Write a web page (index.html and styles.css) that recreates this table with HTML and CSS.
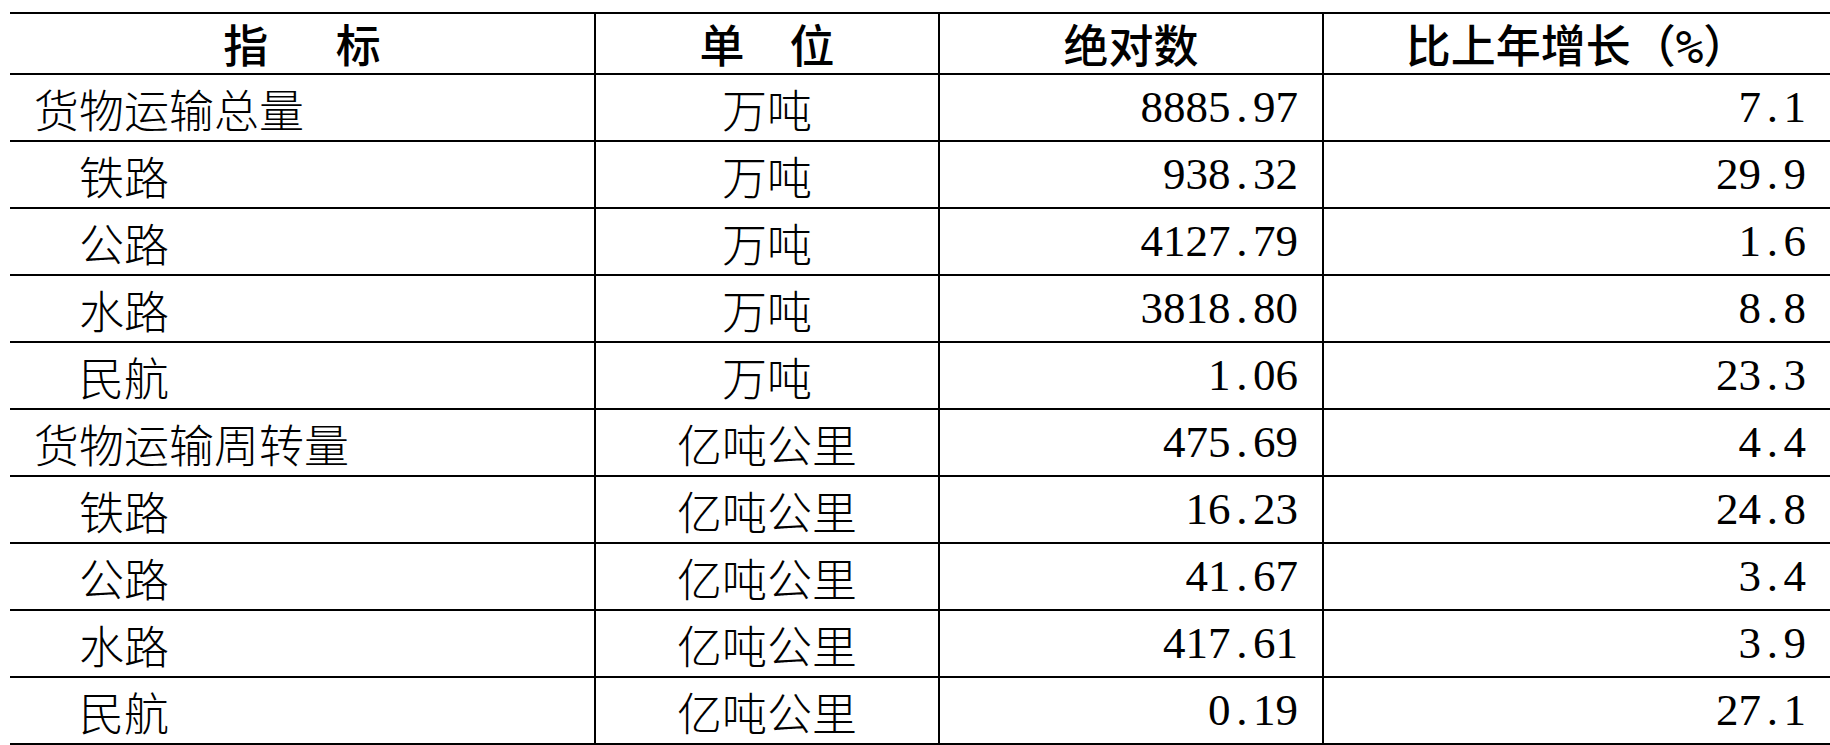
FILE: index.html
```html
<!DOCTYPE html>
<html lang="zh-CN">
<head>
<meta charset="utf-8">
<title>货物运输</title>
<link rel="stylesheet" href="styles.css">
</head>
<body>
<div class="tbl">
  <div class="cell head">指&emsp;&ensp;标</div>
  <div class="cell head">单&emsp;位</div>
  <div class="cell head">绝对数</div>
  <div class="cell head last">比上年增长（<span class="pct">%</span>）</div>

  <div class="cell name">货物运输总量</div>
  <div class="cell unit">万吨</div>
  <div class="cell num">8885<span class="dot">.</span>97</div>
  <div class="cell num last">7<span class="dot">.</span>1</div>

  <div class="cell name sub">铁路</div>
  <div class="cell unit">万吨</div>
  <div class="cell num">938<span class="dot">.</span>32</div>
  <div class="cell num last">29<span class="dot">.</span>9</div>

  <div class="cell name sub">公路</div>
  <div class="cell unit">万吨</div>
  <div class="cell num">4127<span class="dot">.</span>79</div>
  <div class="cell num last">1<span class="dot">.</span>6</div>

  <div class="cell name sub">水路</div>
  <div class="cell unit">万吨</div>
  <div class="cell num">3818<span class="dot">.</span>80</div>
  <div class="cell num last">8<span class="dot">.</span>8</div>

  <div class="cell name sub">民航</div>
  <div class="cell unit">万吨</div>
  <div class="cell num">1<span class="dot">.</span>06</div>
  <div class="cell num last">23<span class="dot">.</span>3</div>

  <div class="cell name">货物运输周转量</div>
  <div class="cell unit">亿吨公里</div>
  <div class="cell num">475<span class="dot">.</span>69</div>
  <div class="cell num last">4<span class="dot">.</span>4</div>

  <div class="cell name sub">铁路</div>
  <div class="cell unit">亿吨公里</div>
  <div class="cell num">16<span class="dot">.</span>23</div>
  <div class="cell num last">24<span class="dot">.</span>8</div>

  <div class="cell name sub">公路</div>
  <div class="cell unit">亿吨公里</div>
  <div class="cell num">41<span class="dot">.</span>67</div>
  <div class="cell num last">3<span class="dot">.</span>4</div>

  <div class="cell name sub">水路</div>
  <div class="cell unit">亿吨公里</div>
  <div class="cell num">417<span class="dot">.</span>61</div>
  <div class="cell num last">3<span class="dot">.</span>9</div>

  <div class="cell name sub">民航</div>
  <div class="cell unit">亿吨公里</div>
  <div class="cell num">0<span class="dot">.</span>19</div>
  <div class="cell num last">27<span class="dot">.</span>1</div>
</div>
</body>
</html>
```

FILE: styles.css
```css
html, body {
  margin: 0;
  padding: 0;
  background: #fff;
}

body {
  height: 745px;
  overflow: hidden;
}

.tbl {
  display: grid;
  grid-template-columns: 586px 344px 384px 506px;
  grid-template-rows: 61px repeat(10, 67px);
  width: 1820px;
  margin: 12px 0 0 10px;
  border-top: 2px solid #000;
  font-size: 45px;
  color: #000;
}

.cell {
  box-sizing: border-box;
  border-bottom: 2px solid #000;
  border-right: 2px solid #000;
  line-height: 65px;
  white-space: nowrap;
}

.cell.last {
  border-right: none;
}

.head {
  font-family: "Noto Sans CJK SC", sans-serif;
  font-weight: 500;
  line-height: 59px;
  text-align: center;
}

.pct {
  font-family: "DejaVu Sans Mono", monospace;
  font-weight: 400;
  font-size: 46px;
}

.name,
.unit {
  font-family: "Noto Sans CJK SC", sans-serif;
  font-weight: 300;
  padding-top: 2px;
  line-height: 63px;
}

.name {
  padding-left: 24px;
}

.name.sub {
  padding-left: 69px;
}

.unit {
  text-align: center;
}

.num {
  font-family: "Liberation Serif", "Times New Roman", serif;
  font-weight: 400;
  text-align: right;
  padding-right: 24px;
}

.dot {
  display: inline-block;
  width: 0.5em;
  text-align: center;
}
```
